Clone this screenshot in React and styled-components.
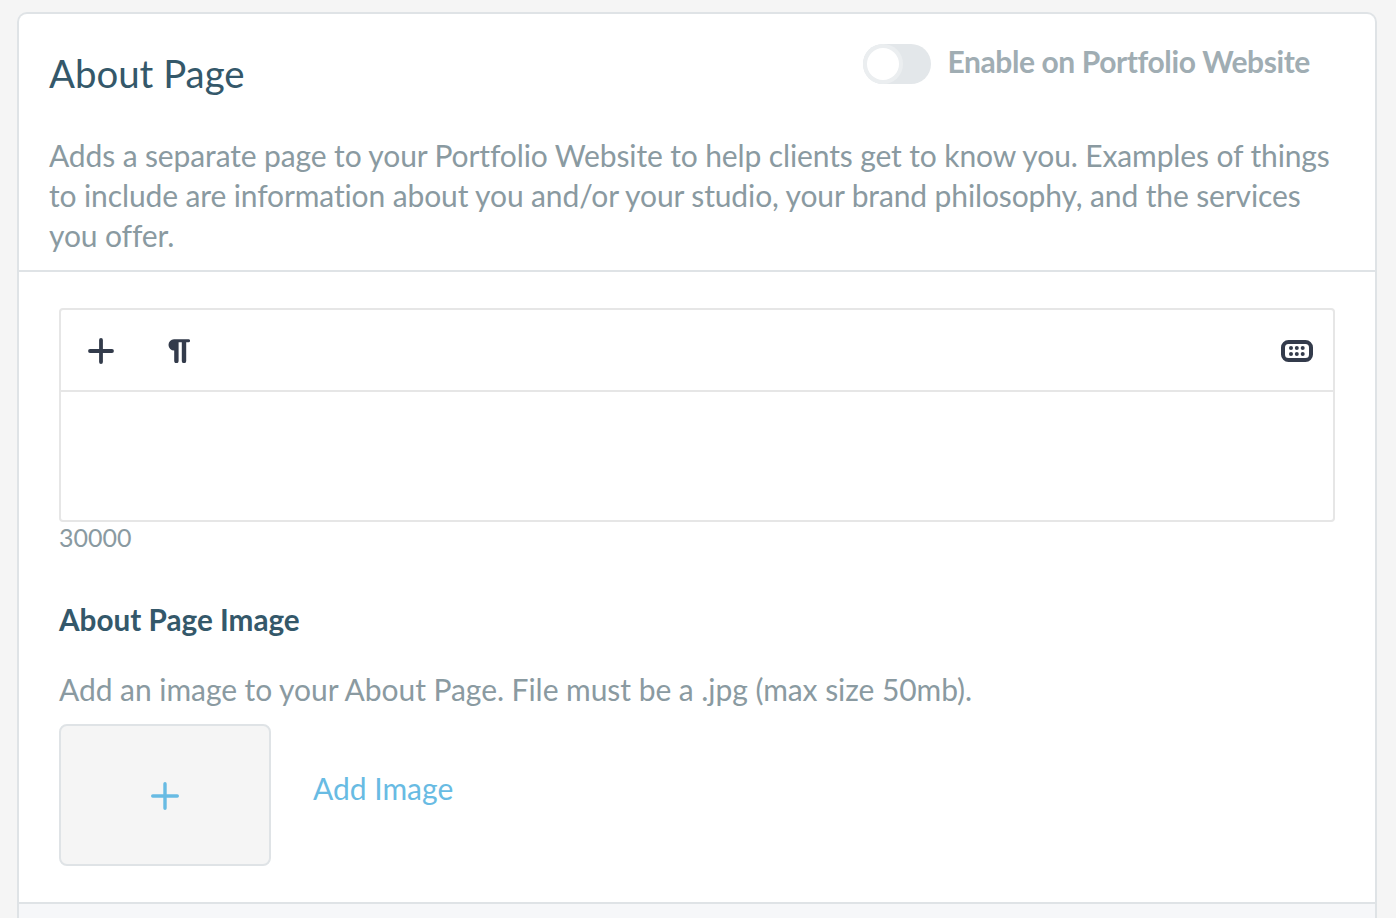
import React from "react";
import styled, { createGlobalStyle } from "styled-components";

const GlobalStyle = createGlobalStyle`
  html, body {
    margin: 0;
    padding: 0;
    height: 918px;
    overflow: hidden;
    background: #f5f5f5;
    font-family: "Lato", "Noto Sans", sans-serif;
  }
`;

const Page = styled.div`
  padding: 12px 18px 0 17px;
  width: 1396px;
  height: 918px;
  box-sizing: border-box;
  overflow: hidden;
`;

const Card = styled.section`
  width: 1360px;
  background: #fff;
  border: 2px solid #dfe3e6;
  border-bottom: 0;
  border-radius: 10px 10px 0 0;
  box-sizing: border-box;
`;

const Header = styled.header`
  padding: 30px 30px 15px 30px;
  border-bottom: 2px solid #dfe3e6;
`;

const TitleRow = styled.div`
  display: flex;
  justify-content: space-between;
  align-items: flex-start;
  height: 91px;
`;

const Title = styled.h1`
  margin: 6px 0 0;
  font-size: 38.4px;
  line-height: 46px;
  font-weight: 400;
  color: #34586a;
`;

const ToggleWrap = styled.div`
  display: flex;
  align-items: flex-start;
  gap: 16px;
  margin-right: 35px;
`;

const Track = styled.div`
  width: 68px;
  height: 40px;
  border-radius: 20px;
  background: #e3e7ea;
  padding: 4px;
  box-sizing: border-box;
`;

const Knob = styled.div`
  width: 32px;
  height: 32px;
  border-radius: 50%;
  background: #fff;
  box-shadow: 0 0 0 4px #ebeef0;
`;

const ToggleLabel = styled.span`
  font-size: 30px;
  font-weight: 700;
  line-height: 34px;
  letter-spacing: -0.4px;
  color: #a0adb3;
`;

const Description = styled.p`
  margin: 0;
  font-size: 30px;
  line-height: 40px;
  letter-spacing: -0.12px;
  color: #8a9aa1;
`;

const Body = styled.div`
  padding: 36px 40px 36px 40px;
  border-bottom: 2px solid #dfe3e6;
`;

const Editor = styled.div`
  width: 1276px;
  border: 2px solid #e6e6e6;
  border-radius: 4px;
  box-sizing: border-box;
`;

const Toolbar = styled.div`
  height: 82px;
  display: flex;
  align-items: center;
  padding: 2px 0 0 27px;
  box-sizing: border-box;
  border-bottom: 2px solid #e6e6e6;
`;

const ToolButton = styled.button`
  width: ${(p) => p.$width}px;
  height: 30px;
  padding: 0;
  margin-right: ${(p) => p.$gap || 0}px;
  margin-left: ${(p) => (p.$end ? "auto" : "0")};
  border: 0;
  background: none;
  display: flex;
  align-items: center;
  justify-content: center;
`;

const EditorArea = styled.div`
  height: 128px;
`;

const Counter = styled.div`
  font-size: 25px;
  line-height: 30px;
  color: #8a9aa1;
`;

const SubTitle = styled.h2`
  margin: 50px 0 0;
  font-size: 29.7px;
  line-height: 36px;
  font-weight: 700;
  color: #34586a;
`;

const Hint = styled.p`
  margin: 31px 0 0;
  font-size: 30px;
  line-height: 40px;
  letter-spacing: -0.05px;
  color: #8a9aa1;
`;

const UploadRow = styled.div`
  display: flex;
  align-items: flex-start;
  gap: 42px;
  margin-top: 15px;
`;

const UploadBox = styled.div`
  width: 212px;
  height: 142px;
  padding-top: 2px;
  background: #f5f5f5;
  border: 2px solid #dfe3e6;
  border-radius: 8px;
  box-sizing: border-box;
  display: flex;
  align-items: center;
  justify-content: center;
`;

const AddLink = styled.a`
  margin-top: 44px;
  font-size: 30px;
  line-height: 40px;
  color: #68bbe3;
`;

const Footer = styled.div`
  height: 20px;
  background: #f6f7f9;
`;

export default function App() {
  return (
    <Page>
      <GlobalStyle />
      <Card>
        <Header>
          <TitleRow>
            <Title>About Page</Title>
            <ToggleWrap>
              <Track>
                <Knob />
              </Track>
              <ToggleLabel>Enable on Portfolio Website</ToggleLabel>
            </ToggleWrap>
          </TitleRow>
          <Description>
            Adds a separate page to your Portfolio Website to help clients get to know you. Examples of things to include are information about you and/or your studio, your brand philosophy, and the services you offer.
          </Description>
        </Header>
        <Body>
          <Editor>
            <Toolbar>
              <ToolButton $width={26} $gap={54}>
                <svg width="26" height="26" viewBox="0 0 26 26">
                  <path d="M13 2v22M2 13h22" stroke="#333b4b" strokeWidth="3.8" strokeLinecap="round" fill="none" />
                </svg>
              </ToolButton>
              <ToolButton $width={22}>
                <svg width="22" height="24" viewBox="0 0 22 24">
                  <path d="M6 .3h14.6a1.45 1.45 0 0 1 0 2.9h-2.4V22a2.2 2.2 0 0 1-4.4 0V3.2h-3.2V22a2.2 2.2 0 0 1-4.4 0V11.5A5.6 5.6 0 0 1 6 .3z" fill="#333b4b" />
                </svg>
              </ToolButton>
              <ToolButton $end $width={32} $gap={20}>
                <svg width="32" height="22" viewBox="0 0 32 22">
                  <rect x="2" y="2" width="28" height="18" rx="5.5" fill="none" stroke="#333b4b" strokeWidth="4" />
                  <g fill="#333b4b">
                    <circle cx="10" cy="8" r="2" />
                    <circle cx="15.8" cy="8" r="2" />
                    <circle cx="21.7" cy="8" r="2" />
                    <circle cx="10" cy="14" r="2" />
                    <circle cx="15.8" cy="14" r="2" />
                    <circle cx="21.7" cy="14" r="2" />
                  </g>
                </svg>
              </ToolButton>
            </Toolbar>
            <EditorArea />
          </Editor>
          <Counter>30000</Counter>
          <SubTitle>About Page Image</SubTitle>
          <Hint>Add an image to your About Page. File must be a .jpg (max size 50mb).</Hint>
          <UploadRow>
            <UploadBox>
              <svg width="28" height="28" viewBox="0 0 28 28">
                <path d="M14 1.7v24.6M1.7 14h24.6" stroke="#68bbe3" strokeWidth="3.4" strokeLinecap="round" fill="none" />
              </svg>
            </UploadBox>
            <AddLink>Add Image</AddLink>
          </UploadRow>
        </Body>
        <Footer />
      </Card>
    </Page>
  );
}
